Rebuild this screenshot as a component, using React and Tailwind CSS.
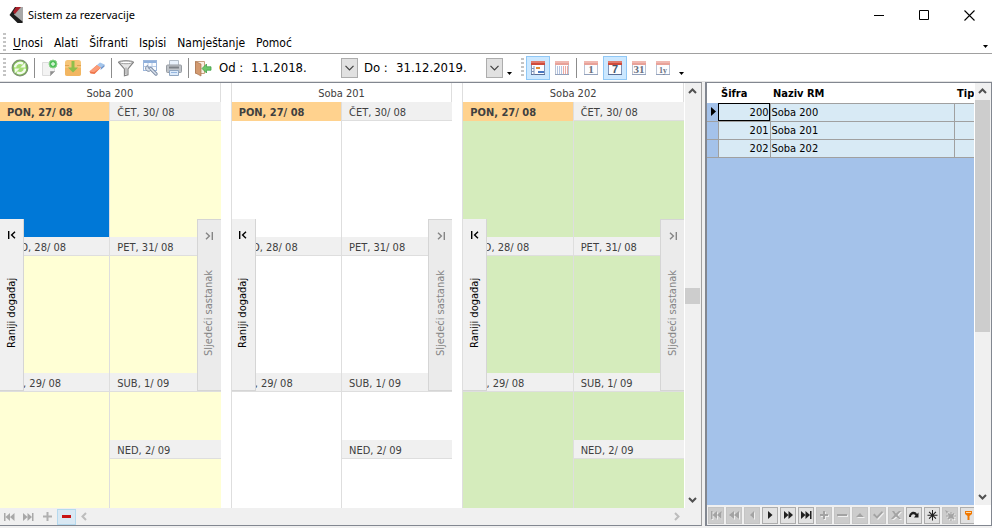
import { Fragment } from "react"

const menuItems = ["Unosi", "Alati", "Šifranti", "Ispisi", "Namještanje", "Pomoć"]

const rooms = [
  { code: 200, name: "Soba 200", cell: "bg-[#ffffd5]", selected: true },
  { code: 201, name: "Soba 201", cell: "bg-white", selected: false },
  { code: 202, name: "Soba 202", cell: "bg-[#d5ecbc]", selected: false },
]

/* ---------- toolbar icons ---------- */

const RefreshIcon = () => (
  <svg width="18" height="18" viewBox="0 0 18 18">
    <circle cx="9" cy="9" r="7.8" fill="#7cc24c" stroke="#7d9172" strokeWidth="1.2" />
    <circle cx="9" cy="9" r="6" fill="#a5dc74" />
    <path d="M4 8.4a5 5 0 0 1 8-3.6" fill="none" stroke="#f4fbee" strokeWidth="2.4" />
    <path d="M14.4 3.4v5H9.4z" fill="#f4fbee" />
    <path d="M14 9.6a5 5 0 0 1-8 3.600" fill="none" stroke="#f4fbee" strokeWidth="2.4" />
    <path d="M3.6 14.6v-5h5z" fill="#f4fbee" />
  </svg>
)

const NewPageIcon = () => (
  <svg width="18" height="18" viewBox="0 0 18 18">
    <path d="M2.500 3.500h12v9l-4 4h-8z" fill="#f3f3f3" stroke="#dcdcdc" />
    <path d="M10.500 16.500v-4h4z" fill="#8f8f8f" stroke="#a8a8a8" />
    <circle cx="13" cy="5" r="4" fill="#4fc05a" stroke="#8fd28a" />
    <path d="M13 3v4M11 5h4" stroke="#d8f5d8" strokeWidth="1.4" />
  </svg>
)

const DownloadIcon = () => (
  <svg width="18" height="18" viewBox="0 0 18 18">
    <rect x="1" y="1" width="16" height="16" rx="2.500" fill="#f6c578" />
    <path d="M1 9h16v5.500a2.500 2.500 0 0 1-2.500 2.500h-11A2.500 2.500 0 0 1 1 14.500z" fill="#f2b662" />
    <path d="M1 6.500h4M13 6.500h4" stroke="#e0a452" />
    <path d="M7.500 2h3v6.500h3.500L9 13.500 4 8.500h3.500z" fill="#8fbf4a" />
  </svg>
)

const EraserIcon = () => (
  <svg width="18" height="18" viewBox="0 0 18 18">
    <path d="M1.500 12.500 9 6l4 2.500-6.500 6.500-4-.5z" fill="#ee7448" />
    <path d="M1.500 12.500 9 6l4 2.500-7 4.800z" fill="#fb9c78" />
    <path d="m9 6 3-2.500 4.500 2L13 8.500z" fill="#a4c6ec" />
    <path d="m13 8.500 3.500-3v2L12.500 11z" fill="#6c94cc" />
  </svg>
)

const FunnelIcon = () => (
  <svg width="18" height="18" viewBox="0 0 18 18">
    <path d="M1.500 3.200C1.500 1.200 16.500 1.200 16.500 3.200L11 10v5.800l-3.600 1V10z" fill="#e6e6e6" stroke="#808080" strokeWidth="1.1" />
    <ellipse cx="9" cy="3.400" rx="6.400" ry="1.300" fill="#fff" stroke="#8c8c8c" strokeWidth=".8" />
    <path d="M9 8.500v6.500" stroke="#a8a8a8" strokeWidth="1.2" />
  </svg>
)

const TableToolIcon = () => (
  <svg width="18" height="18" viewBox="0 0 18 18">
    <rect x="2.500" y="1.500" width="13" height="10" fill="#fafcff" stroke="#9db7dc" />
    <path d="M3 2h12v2H3z" fill="#8fb0dc" />
    <path d="M3 7.500h12M7 4v7M11 4v7" stroke="#b8cae4" />
    <path d="m9.500 9.500 5.500 5.500" stroke="#7d8ca4" strokeWidth="3.400" strokeLinecap="round" />
    <path d="M6.500 6.500a3 3 0 1 0 4 3.500L9 10.500 7.500 9z" fill="#dbe3ee" stroke="#7d8ca4" />
    <path d="m9.500 9.500 5.500 5.500" stroke="#dbe3ee" strokeWidth="1.400" strokeLinecap="round" />
  </svg>
)

const PrinterIcon = () => (
  <svg width="18" height="18" viewBox="0 0 18 18">
    <path d="M4.500 1.500h9v5h-9z" fill="#e9f2fc" stroke="#b4bec9" />
    <rect x="1.500" y="6" width="15" height="7.500" rx="1" fill="#bfc3c8" stroke="#989da3" />
    <path d="M4 8.500h10" stroke="#7c8187" strokeWidth="2" />
    <path d="M4.500 11.500h9v5h-9z" fill="#dceafa" stroke="#8fa6c2" />
    <path d="M6 13.500h6" stroke="#94b6e0" />
  </svg>
)

const ExitIcon = () => (
  <svg width="18" height="18" viewBox="0 0 18 18">
    <path d="M1.500 2.500h9v12h-9z" fill="#fbeee2" stroke="#c9a080" />
    <path d="m1.500 2.500 5.500 2.500v12L1.500 14z" fill="#d39a70" stroke="#a87450" strokeWidth=".7" />
    <path d="M8 9.500 12.500 5v2.800h4.500v3.400h-4.500V14z" fill="#6cc66a" stroke="#43a047" strokeWidth=".8" />
  </svg>
)

const CalendarIcon = ({ children, faded }) => (
  <svg width="16" height="16" viewBox="0 0 16 16">
    <rect x="1.500" y="1.500" width="13" height="13" fill="#fdfdfe" stroke={faded ? "#b9c3d4" : "#7f94b8"} />
    <path d="M1 14.500h14" stroke={faded ? "#93a1bb" : "#5a6f96"} />
    <path d="M1 1h14v4H1z" fill={faded ? "#e8a299" : "#cf4b3b"} />
    <path d="M1 1h14v2H1z" fill={faded ? "#f0b8b0" : "#e07a6c"} />
    {children}
  </svg>
)

const DayDigits = ({ label, size = 11, color = "#66707f", family = "Liberation Serif, serif" }) => (
  <text x="8" y="13" textAnchor="middle" fontFamily={family} fontWeight="bold" fontSize={size} fill={color}>
    {label}
  </text>
)

/* ---------- small parts ---------- */

function Grip() {
  return <div className="h-5 w-[3px] shrink-0 bg-[repeating-linear-gradient(to_bottom,#c4c4c4_0_2px,transparent_2px_4px)]" />
}

function Separator() {
  return <div className="mx-0.5 h-5 w-px shrink-0 bg-[#8c8c8c]" />
}

function ToolButton({ label, children, active }) {
  return (
    <button
      aria-label={label}
      className={`flex h-6 w-6 shrink-0 items-center justify-center border ${
        active ? "border-[#90c8f6] bg-[#cce8ff]" : "border-transparent hover:bg-[#e5f3ff]"
      }`}
    >
      {children}
    </button>
  )
}

function MoreArrow({ className }) {
  return (
    <svg width="5" height="3" className={`shrink-0 ${className}`}>
      <path d="M0 0h5L2.500 3z" fill="#000" />
    </svg>
  )
}

function Chevron({ dir, color = "#505050" }) {
  const paths = {
    up: "m1 6 3.5-3.5L8 6",
    down: "m1 3 3.5 3.5L8 3",
    left: "M6 1 2.5 4.5 6 8",
    right: "m3 1 3.5 3.5L3 8",
  }
  return (
    <svg width="9" height="9" viewBox="0 0 9 9">
      <path d={paths[dir]} fill="none" stroke={color} strokeWidth="2" />
    </svg>
  )
}

function DateField({ id, label, value, className }) {
  return (
    <div className={`flex shrink-0 items-center text-[13px] ${className}`}>
      <label htmlFor={id} className="w-8 whitespace-nowrap">{label}</label>
      <div className="relative">
        <select id={id} defaultValue={value} className="block h-5 w-[107px] appearance-none bg-white p-0 leading-5 outline-none">
          <option>{value}</option>
        </select>
        <span className="pointer-events-none absolute inset-y-0 right-0 flex w-[17px] items-center justify-center border border-[#adadad] bg-[#e1e1e1]">
          <svg width="9" height="6" viewBox="0 0 9 6">
            <path d="m.5.8 4 4 4-4" fill="none" stroke="#404040" strokeWidth="1.2" />
          </svg>
        </span>
      </div>
    </div>
  )
}

/* ---------- window chrome ---------- */

function TitleBar() {
  return (
    <header className="flex h-[30px] shrink-0 items-center pl-2">
      <svg width="16" height="18" viewBox="0 0 16 18">
        <path d="M7 1h8v16L6 9z" fill="#a8a8a8" />
        <path d="M7 1h4L6 8.500l8.500 7V17h-5L1.500 9z" fill="#1c1c1c" />
        <path d="M8 1h5L7 8 5 6z" fill="#a8202a" />
      </svg>
      <h1 className="ml-1 font-['Noto_Sans',sans-serif] text-[11px] leading-4">Sistem za rezervacije</h1>
      <div className="ml-auto flex">
        <button aria-label="Minimize" className="flex h-7 w-[45px] items-center justify-center">
          <svg width="11" height="11"><path d="M0 5.500h10" stroke="#000" /></svg>
        </button>
        <button aria-label="Maximize" className="flex h-7 w-[45px] items-center justify-center">
          <svg width="11" height="11"><path d="M.5.5h9v9h-9z" fill="none" stroke="#000" /></svg>
        </button>
        <button aria-label="Close" className="flex h-7 w-[45px] items-center justify-center">
          <svg width="11" height="11"><path d="m.5.5 10 10m0-10-10 10" stroke="#000" strokeWidth="1.1" /></svg>
        </button>
      </div>
    </header>
  )
}

function MenuBar() {
  return (
    <nav className="flex h-6 shrink-0 items-center gap-[11px] border-b border-[#a0a0a0] pl-[3px] pr-1 pt-0.5 text-[12px] leading-4">
      <Grip />
      {menuItems.map((item, i) => (
        <button key={item} className={i === 0 ? "-ml-1" : ""}>
          {i === 0 ? <><span className="underline underline-offset-2">U</span>nosi</> : item}
        </button>
      ))}
      <MoreArrow className="ml-auto mt-2" />
    </nav>
  )
}

function ToolBar() {
  return (
    <div className="flex h-7 shrink-0 items-center border-b border-[#e3e3e3] pl-[3px]">
      <Grip />
      <div className="ml-0.5 flex items-center">
        <ToolButton label="Refresh"><RefreshIcon /></ToolButton>
        <Separator />
        <ToolButton label="New"><NewPageIcon /></ToolButton>
        <ToolButton label="Save"><DownloadIcon /></ToolButton>
        <ToolButton label="Erase"><EraserIcon /></ToolButton>
        <Separator />
        <ToolButton label="Filter"><FunnelIcon /></ToolButton>
        <ToolButton label="Customize"><TableToolIcon /></ToolButton>
        <ToolButton label="Print"><PrinterIcon /></ToolButton>
        <Separator />
        <ToolButton label="Exit"><ExitIcon /></ToolButton>
      </div>
      <DateField id="from" label="Od :" value="1.1.2018." className="ml-1" />
      <DateField id="to" label="Do :" value="31.12.2019." className="ml-1.5" />
      <MoreArrow className="ml-1 mt-3" />
      <div className="ml-[9px] flex items-center">
        <Grip />
        <div className="ml-0.5 flex items-center">
          <ToolButton label="Timeline" active>
            <CalendarIcon>
              <path d="M4 6v9M1 8.500h3M1 11.500h3" stroke="#7f94b8" />
              <path d="M6 7h4v2H6z" fill="#e08b34" />
              <path d="M8 11h6v2H8z" fill="#4777c2" />
            </CalendarIcon>
          </ToolButton>
          <ToolButton label="Grid">
            <CalendarIcon faded>
              <path d="M3.500 6v8M5.500 6v8M7.500 6v8" stroke="#b4c4e0" />
              <path d="M9.500 6v8M11.500 6v8M13.500 6v8" stroke="#ecaaa3" />
            </CalendarIcon>
          </ToolButton>
          <Separator />
          <ToolButton label="Day"><CalendarIcon faded><DayDigits label="1" /></CalendarIcon></ToolButton>
          <ToolButton label="Week" active>
            <CalendarIcon><DayDigits label="7" color="#44566f" family="Liberation Sans, sans-serif" /></CalendarIcon>
          </ToolButton>
          <ToolButton label="Month"><CalendarIcon faded><DayDigits label="31" /></CalendarIcon></ToolButton>
          <ToolButton label="Year"><CalendarIcon faded><DayDigits label="1y" size={8} /></CalendarIcon></ToolButton>
        </div>
      </div>
      <MoreArrow className="ml-1 mt-3" />
    </div>
  )
}

/* ---------- scheduler ---------- */

function Day({ label, today, color }) {
  return (
    <section className="flex min-h-0 flex-1 flex-col">
      <h3
        className={`h-[19px] shrink-0 border-b pl-[7px] text-[11px] leading-[22px] ${
          today ? "border-[#ffd28e] bg-[#ffd28e] font-bold text-[#404040]" : "border-[#dedede] bg-[#f0f0f0] text-[#404040]"
        }`}
      >
        {label}
      </h3>
      <div className={`flex-1 ${color}`} />
    </section>
  )
}

function EventTab({ label, next }) {
  return (
    <button
      disabled={next}
      className={`absolute top-1/2 flex h-[172px] w-6 -translate-y-1/2 flex-col items-center border-[#d5d5d5] ${
        next ? "right-0 border-y border-l bg-[#ebebeb] text-[#858585]" : "left-0 border-b border-r bg-[#f0f0f0] text-black"
      }`}
    >
      <svg width="8" height="8" viewBox="0 0 8 8" className={`mt-3 shrink-0 ${next ? "rotate-180" : ""}`}>
        <path d="M.7 0v8M7 .8 3.6 4 7 7.2" fill="none" stroke="currentColor" strokeWidth="1.4" />
      </svg>
      <span className="flex flex-1 rotate-180 items-center justify-center whitespace-nowrap pt-1 text-[11px] leading-4 [writing-mode:vertical-rl]">
        {label}
      </span>
    </button>
  )
}

function RoomColumn({ room }) {
  return (
    <article className="flex min-w-0 flex-col">
      <h2 className="h-[19px] shrink-0 border-r border-[#dedede] text-center text-[11px] leading-[22px] text-[#404040]">{room.name}</h2>
      <div className="relative grid min-h-0 flex-1 grid-cols-2">
        <div className="flex min-h-0 flex-col border-r border-[#dedede]">
          <Day label="PON, 27/ 08" today color={room.selected ? "bg-[#0078d7]" : room.cell} />
          <Day label="UTO, 28/ 08" color={room.cell} />
          <Day label="SRI, 29/ 08" color={room.cell} />
        </div>
        <div className="flex min-h-0 flex-col">
          <Day label="ČET, 30/ 08" color={room.cell} />
          <Day label="PET, 31/ 08" color={room.cell} />
          <div className="flex min-h-0 flex-1 flex-col">
            <Day label="SUB, 1/ 09" color={room.cell} />
            <Day label="NED, 2/ 09" color={room.cell} />
          </div>
        </div>
        <EventTab label="Raniji događaj" />
        <EventTab label="Sljedeći sastanak" next />
      </div>
    </article>
  )
}

function Scheduler() {
  return (
    <main className="flex min-w-0 flex-1 flex-col border-y border-r border-y-[#828790] border-r-[#a0a0a0]">
      <div className="flex min-h-0 flex-1">
        <div className="grid min-w-0 flex-1 grid-cols-[1fr_11px_1fr_11px_1fr]">
          {rooms.map((room, i) => (
            <Fragment key={room.code}>
              {i > 0 && <div className="border-r border-[#dedede]" />}
              <RoomColumn room={room} />
            </Fragment>
          ))}
        </div>
        <div className="flex w-[17px] shrink-0 flex-col items-center justify-between border-l border-white bg-[#f0f0f0] py-1 pr-px">
          <Chevron dir="up" />
          <div className="h-4 w-[15px] bg-[#cdcdcd]" />
          <Chevron dir="down" />
        </div>
      </div>
      <div className="flex h-[17px] shrink-0 items-center bg-[#f0f0f0] pr-5">
        <button aria-label="First" className="flex h-4 w-[19px] items-center justify-center">
          <svg width="11" height="8"><path d="M0 0h1.500v8H0zM6 0v8L1.500 4zM10.500 0v8L6 4z" fill="#a8a8a8" /></svg>
        </button>
        <button aria-label="Last" className="flex h-4 w-[19px] items-center justify-center">
          <svg width="11" height="8"><path d="M9 0h1.500v8H9zM0 0v8l4.500-4zM4.500 0v8L9 4z" fill="#a8a8a8" /></svg>
        </button>
        <button aria-label="Add" className="flex h-4 w-[19px] items-center justify-center">
          <svg width="9" height="9"><path d="M3.500 0h2v3.500H9v2H5.500V9h-2V5.500H0v-2h3.500z" fill="#b0b0b0" /></svg>
        </button>
        <button aria-label="Remove" className="flex h-4 w-[19px] items-center justify-center border border-[#b5d9ee] bg-[#d9e8f3]">
          <svg width="9" height="3"><path d="M0 0h9v3H0z" fill="#c81414" /></svg>
        </button>
        <div className="flex flex-1 items-center justify-between pl-1">
          <Chevron dir="left" color="#bdbdbd" />
          <Chevron dir="right" color="#bdbdbd" />
        </div>
      </div>
    </main>
  )
}

/* ---------- room list ---------- */

const navButtons = [
  { label: "First", path: "M0 1h1.500v8H0zM6 1v8L1.500 5zM10.500 1v8L6 5z", off: true },
  { label: "Prior page", path: "M5 1v8L0 5zM10 1v8L5 5z", off: true },
  { label: "Prior", path: "M7 1v8L3 5z", off: true },
  { label: "Next", path: "M3 1v8l4.500-4z" },
  { label: "Next page", path: "M1 1v8l4.500-4zM5.500 1v8L10 5z" },
  { label: "Last", path: "M0 1v8l4.500-4zM4.500 1v8L9 5zM9 1h1.500v8H9z" },
  { label: "Insert", path: "M4 1h2v3h3v2H6v3H4V6H1V4h3z", off: true },
  { label: "Delete", path: "M0 4h10v2H0z", off: true },
  { label: "Edit", path: "M1 7h8L5 3z", off: true },
  { label: "Post", path: "m0 5 1.500-1.500L4 6l5-5 1 1.500L4 9z", off: true },
  { label: "Cancel", path: "M1 1h2l2 2.500L8 1h2L6.500 5 10 9H8L5 6.500 2 9H0l3.500-4z", off: true },
  { label: "Reload", path: "M0 7c0-5 6-7 8-3l1.500-1.500V7.500H5L6.500 5.500C5 3.500 2 4 2 7z" },
  { label: "Bookmark", path: "M5 0h1v4l2.500-2.500.8.8L6.800 4.800H10.500v1H6.800l2.500 2.500-.8.800L6 6.600V10.500H5V6.600L2.500 9.100l-.8-.8 2.500-2.500H.5v-1h3.700L1.700 2.300l.8-.8L5 4z" },
  { label: "Go to bookmark", path: "M0 0l4 2-1.500.5L2 4zM5.500 2h1v2.500L8.500 3l1 1L8 5.500h3v1H8l1.500 2-1 1-2-1.500V11h-1V8l-2 1.500-1-1 1.500-2H1v-1h3L2.500 4l1-1 2 1.500z", off: true },
]

function RoomList() {
  return (
    <aside className="flex w-[287px] shrink-0 border border-[#828790] border-l-2 bg-white">
      <div className="flex min-w-0 flex-1 flex-col">
        <div className="min-h-0 flex-1 overflow-hidden bg-[#a4c2ea]">
          <table className="w-full table-fixed border-collapse text-[11px] leading-4">
            <thead>
              <tr className="h-5 bg-white text-left">
                <th className="w-[11px]" />
                <th className="w-[52px] p-0 pl-[3px] pt-0.5">Šifra</th>
                <th className="w-[184px] p-0 pl-[3px] pt-0.5">Naziv RM</th>
                <th className="overflow-hidden p-0 pl-[3px] pt-0.5">Tip</th>
              </tr>
            </thead>
            <tbody>
              {rooms.map((room) => (
                <tr key={room.code} className="h-[18px] bg-[#d8eaf5]">
                  <td className="border-b border-r border-[#a0a0a0] bg-[#a4c2ea] p-0">
                    {room.selected && (
                      <svg width="5" height="9" className="ml-1"><path d="M0 0v9l5-4.500z" fill="#000" /></svg>
                    )}
                  </td>
                  <td className={`border border-[#a0a0a0] p-0 pr-px pt-px text-right ${room.selected ? "outline -outline-offset-1 outline-black" : ""}`}>
                    {room.code}
                  </td>
                  <td className="border border-[#a0a0a0] p-0 pl-px pt-px">{room.name}</td>
                  <td className="border-y border-[#a0a0a0] p-0" />
                </tr>
              ))}
            </tbody>
          </table>
        </div>
        <div className="flex h-5 shrink-0 items-center overflow-hidden bg-[#f0f0f0] pl-px">
          {navButtons.map((b) => (
            <button
              key={b.label}
              aria-label={b.label}
              disabled={b.off}
              className={`mr-0.5 flex h-[17px] w-4 shrink-0 items-center justify-center border ${
                b.off ? "border-[#c4c4c4] bg-[#cccccc] text-[#a3a3a3]" : "border-[#adadad] bg-[#e1e1e1] text-[#202020]"
              }`}
            >
              <svg width="11" height="11" viewBox="0 0 11 11" className="shrink-0">
                {b.off && <path d={b.path} fill="#efefef" transform="translate(1 1)" />}
                <path d={b.path} fill="currentColor" />
              </svg>
            </button>
          ))}
          <button aria-label="Filter" className="flex h-[17px] w-4 shrink-0 items-center justify-center border border-[#adadad] bg-[#e1e1e1]">
            <svg width="9" height="9"><path d="M1 0h7v3L5.500 5v4h-2V5L1 3z" fill="#f07800" /><path d="M2 1h5v1H2z" fill="#ffd9a8" /></svg>
          </button>
        </div>
      </div>
      <div className="flex w-[17px] shrink-0 flex-col">
        <div className="flex min-h-0 flex-1 flex-col items-center border-l border-white bg-[#f0f0f0] pr-px">
          <div className="flex h-[17px] shrink-0 items-center"><Chevron dir="up" /></div>
          <div className="h-[55%] w-[15px] bg-[#cdcdcd]" />
          <div className="mt-auto flex h-[17px] shrink-0 items-center"><Chevron dir="down" /></div>
        </div>
        <div className="h-5 shrink-0 bg-white" />
      </div>
    </aside>
  )
}

export default function App() {
  return (
    <div className="flex h-screen flex-col bg-white font-['DejaVu_Sans_Condensed','Noto_Sans',sans-serif] text-black">
      <TitleBar />
      <MenuBar />
      <ToolBar />
      <div className="flex min-h-0 flex-1 gap-[3px] bg-[#f0f0f0] pb-0.5 *:bg-white">
        <Scheduler />
        <RoomList />
      </div>
    </div>
  )
}
